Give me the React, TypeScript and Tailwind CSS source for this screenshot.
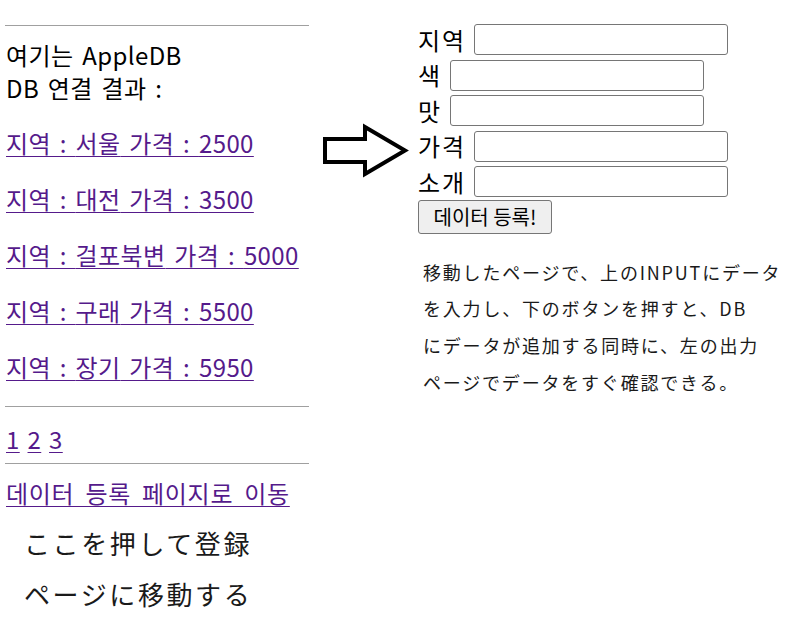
import React from 'react';

const KR = { fontFamily: '"Noto Sans CJK KR", "Noto Sans CJK JP", sans-serif' };

type Fruit = { region: string; price: number };

const FRUITS: Fruit[] = [
  { region: '서울', price: 2500 },
  { region: '대전', price: 3500 },
  { region: '걸포북변', price: 5000 },
  { region: '구래', price: 5500 },
  { region: '장기', price: 5950 },
];

const FIELDS = ['지역', '색', '맛', '가격', '소개'];

const linkClass = 'text-[#551a8b] underline decoration-1 underline-offset-[3px]';

const ArrowIcon = () => (
  <svg width="89" height="57" viewBox="0 0 89 57" fill="none">
    <polygon
      points="4,17 44,17 44,5 84,28.5 44,52 44,40 4,40"
      stroke="#000"
      strokeWidth="4"
      strokeLinejoin="miter"
    />
  </svg>
);

const App: React.FC = () => {
  return (
    <div className="flex min-h-[627px] w-[791px] bg-white text-black" style={KR}>
      {/* 왼쪽: 출력 페이지 */}
      <div className="ml-[5px] w-[304px] pt-[25px] text-[24px] tracking-[0.4px] [word-spacing:3px]">
        <div className="border-t border-[#a0a0a0]" />
        <div className="mt-[12px] pl-px leading-[33px]">
          <div>여기는 AppleDB</div>
          <div>DB 연결 결과 :</div>
        </div>
        <div className="mt-[11px] pl-px">
          {FRUITS.map((f) => (
            <div key={f.region} className="h-[56px] leading-[56px]">
              <a className={linkClass}>
                지역 : {f.region} 가격 : {f.price}
              </a>
            </div>
          ))}
        </div>
        <div className="mt-[11px] border-t border-[#a0a0a0]" />
        <div className="mt-[15px] pl-px leading-[33px] [word-spacing:2px]">
          <a className={linkClass}>1</a> <a className={linkClass}>2</a>{' '}
          <a className={linkClass}>3</a>
        </div>
        <div className="mt-[8px] border-t border-[#a0a0a0]" />
        <div className="mt-[12px] pl-px leading-[33px] tracking-[0.7px] [word-spacing:5px]">
          <a className={linkClass}>데이터 등록 페이지로 이동</a>
        </div>
        <div
          className="mt-[8px] pl-[19px] text-[26px] leading-[51px] tracking-[2.6px] text-[#1a1a1a]"
          style={{ fontFamily: '"Noto Sans CJK JP", sans-serif' }}
        >
          <div>ここを押して登録</div>
          <div>ページに移動する</div>
        </div>
      </div>

      {/* 화살표 */}
      <div className="ml-[12px] pt-[122px]">
        <ArrowIcon />
      </div>

      {/* 오른쪽: 입력 폼 */}
      <div className="ml-[8px] pt-[22px]">
        {FIELDS.map((label) => (
          <div key={label} className="flex h-[35.5px] items-center text-[24px]">
            <span className="tracking-[2px]">{label}</span>
            <input
              type="text"
              className="ml-2 h-[31px] w-[254px] rounded-[3px] border border-[#767676] bg-white"
            />
          </div>
        ))}
        <button className="h-[34px] w-[134px] rounded-[3px] border border-[#767676] bg-[#efefef] text-[20px] text-black">
          데이터 등록!
        </button>
        <p
          className="mt-[20px] pl-[5px] text-[18px] leading-[36.7px] tracking-[1.8px] text-[#1a1a1a]"
          style={{ fontFamily: '"Noto Sans CJK JP", sans-serif' }}
        >
          移動したページで、上のINPUTにデータ
          <br />
          を入力し、下のボタンを押すと、DB
          <br />
          にデータが追加する同時に、左の出力
          <br />
          ページでデータをすぐ確認できる。
        </p>
      </div>
    </div>
  );
};

export default App;
